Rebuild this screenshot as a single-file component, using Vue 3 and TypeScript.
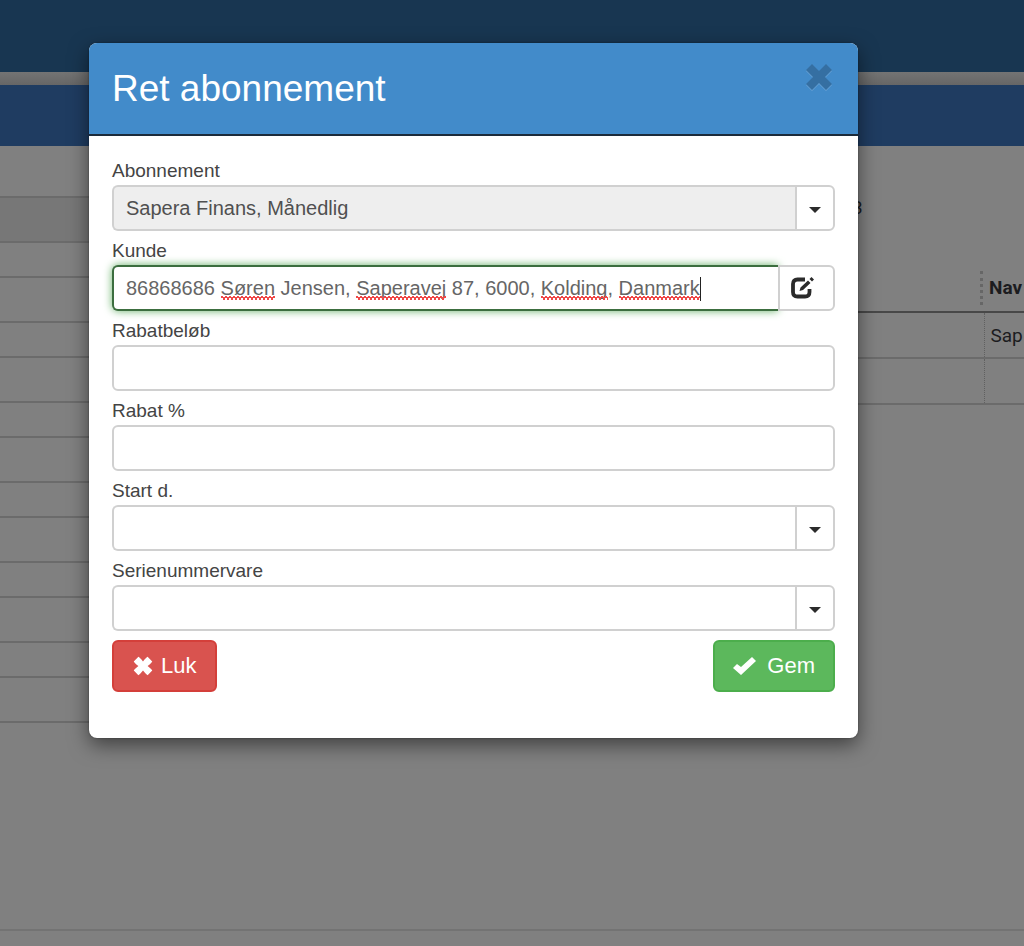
<script setup lang="ts">
import { computed, onMounted, ref } from 'vue'

type Kind = 'combo' | 'edit' | 'text'
interface Field {
  id: string
  label: string
  kind: Kind
  locked?: boolean
}
interface Mark {
  left: number
  width: number
}

const fields: Field[] = [
  { id: 'abonnement', label: 'Abonnement', kind: 'combo', locked: true },
  { id: 'kunde', label: 'Kunde', kind: 'edit' },
  { id: 'rabatbelob', label: 'Rabatbeløb', kind: 'text' },
  { id: 'rabat', label: 'Rabat %', kind: 'text' },
  { id: 'start', label: 'Start d.', kind: 'combo' },
  { id: 'serie', label: 'Serienummervare', kind: 'combo' },
]

const values = ref<Record<string, string>>({
  abonnement: 'Sapera Finans, Månedlig',
  kunde: '86868686 Søren Jensen, Saperavej 87, 6000, Kolding, Danmark',
  rabatbelob: '',
  rabat: '',
  start: '',
  serie: '',
})

const unknownWords = ['Søren', 'Saperavej', 'Kolding', 'Danmark']
const font = ref('')

function measure(text: string): number {
  const ctx = document.createElement('canvas').getContext('2d')
  if (!ctx || !font.value) return 0
  ctx.font = font.value
  return Math.round(ctx.measureText(text).width)
}

const marks = computed<Mark[]>(() => {
  const text = values.value.kunde
  return unknownWords
    .filter((word) => text.includes(word))
    .map((word) => ({ left: measure(text.slice(0, text.indexOf(word))), width: measure(word) }))
})
const caretLeft = computed(() => measure(values.value.kunde))

onMounted(() => {
  const input = document.getElementById('kunde')
  if (input) {
    const style = getComputedStyle(input)
    font.value = `${style.fontSize} ${style.fontFamily}`
  }
})
</script>

<template>
  <div class="page">
    <div class="topbar"></div>
    <div class="strip"></div>
    <div class="navbar"></div>
    <main class="content">
      <div class="boxes">
        <div v-for="n in 7" :key="n" class="box" :class="{ filled: n === 1 }"></div>
      </div>
      <div class="side">
        <p class="count">3</p>
        <table>
          <thead>
            <tr><th></th><th class="name"><span>Nav</span></th></tr>
          </thead>
          <tbody>
            <tr><td></td><td class="name">Sap</td></tr>
            <tr><td></td><td class="name"></td></tr>
          </tbody>
        </table>
      </div>
    </main>
    <footer class="foot"></footer>

    <div class="overlay">
      <section class="modal" role="dialog" aria-labelledby="title">
        <header class="head">
          <h1 id="title">Ret abonnement</h1>
          <button class="close" type="button" aria-label="Luk">
            <svg viewBox="0 0 26 26" width="26" height="26">
              <path d="M6 0 13 7 20 0 26 6 19 13 26 20 20 26 13 19 6 26 0 20 7 13 0 6Z" />
            </svg>
          </button>
        </header>
        <form class="body" @submit.prevent>
          <div v-for="f in fields" :key="f.id" class="field">
            <label :for="f.id">{{ f.label }}</label>
            <div class="group" :class="f.kind">
              <div class="entry">
                <input :id="f.id" v-model="values[f.id]" type="text" :readonly="f.locked" spellcheck="false" autocomplete="off" />
                <div v-if="f.kind === 'edit'" class="marks" aria-hidden="true">
                  <i v-for="(m, i) in marks" :key="i" class="mark" :style="{ left: m.left + 'px', width: m.width + 'px' }"></i>
                  <i class="cursor" :style="{ left: caretLeft + 'px' }"></i>
                </div>
              </div>
              <button v-if="f.kind === 'combo'" class="addon" type="button" :aria-label="f.label">
                <svg viewBox="0 0 12 6" width="12" height="6"><path d="M0 0H12L6 6Z" /></svg>
              </button>
              <button v-else-if="f.kind === 'edit'" class="addon" type="button" :aria-label="f.label">
                <svg viewBox="0 0 24 22" width="24" height="22">
                  <path d="M14 2.500H6.500Q2 2.500 2 7V15Q2 19.500 6.500 19.500H14Q18.500 19.500 18.500 15V12" fill="none" stroke="#2b2b2b" stroke-width="3.800" />
                  <path d="M8.500 14 9.500 10.500 17 3.500 19.500 6 12 13ZM18.500 2 20.500 0 23 2.500 21 4.500Z" />
                </svg>
              </button>
            </div>
          </div>
          <div class="actions">
            <button class="btn danger" type="button">
              <svg viewBox="0 0 26 26" width="20" height="20">
                <path d="M7 1Q8 1 13 7 18 1 19 1L25 7Q25 8 19 13 25 18 25 19L19 25Q18 25 13 19 8 25 7 25L1 19Q1 18 7 13 1 8 1 7Z" />
              </svg>
              Luk
            </button>
            <button class="btn success" type="submit">
              <svg viewBox="0 0 24 19" width="24" height="19"><path d="M0 11 4 7 8 10 19 0 23 4 8 18Z" /></svg>
              Gem
            </button>
          </div>
        </form>
      </section>
    </div>
  </div>
</template>

<style>
body {
  margin: 0;
}
</style>

<style scoped>
* {
  box-sizing: border-box;
}
.page {
  position: relative;
  display: flex;
  flex-direction: column;
  min-height: 100vh;
  overflow: hidden;
  background: #808080;
  color: #1c1c20;
  font: 19px/28px Roboto, sans-serif;
}
.topbar {
  height: 72px;
  background: #183651;
}
.strip {
  height: 13px;
  background: linear-gradient(#747474, #666);
}
.navbar {
  height: 61px;
  background: #1f3c61;
}
.content {
  display: flex;
  flex: 1;
}
.boxes {
  flex: 1;
  display: flex;
  flex-direction: column;
  gap: 33px;
  padding-top: 50px;
}
.box {
  height: 47px;
  border: solid #6b6b6b;
  border-width: 2px 0;
}
.filled {
  background: #777;
}
.side {
  width: 172px;
  padding-top: 48px;
}
.count {
  margin: 0 0 46px;
  height: 28px;
}
table {
  width: 100%;
  border-collapse: collapse;
  table-layout: fixed;
}
th,
td {
  height: 46px;
  padding: 2px 0 0;
  border-bottom: 2px solid #6b6b6b;
  text-align: left;
}
th {
  height: 44px;
  padding-bottom: 6px;
  border-bottom-color: #484848;
}
.name {
  width: 40px;
}
td.name {
  padding-left: 6px;
  border-left: 1px dotted #606060;
}
th span {
  display: block;
  margin-left: -4px;
  padding-left: 6px;
  border-left: 3px dotted #666;
  line-height: 34px;
}
.foot {
  height: 17px;
  border-top: 2px solid #737373;
}
.overlay {
  position: absolute;
  inset: 0;
  padding: 43px 166px 43px 89px;
}
.modal {
  border-radius: 8px;
  overflow: hidden;
  background: #fff;
  box-shadow: 0 7px 20px rgba(0, 0, 0, 0.5), 0 0 2px rgba(0, 0, 0, 0.4);
  font-family: "Liberation Sans", Arial, sans-serif;
}
.head {
  display: flex;
  justify-content: space-between;
  align-items: flex-start;
  padding: 20px 26px 20px 23px;
  border-bottom: 2px solid #1c2b3a;
  background: #428bca;
}
h1 {
  margin: 0;
  color: #fff;
  font-size: 37px;
  font-weight: 400;
  line-height: 51px;
}
button {
  display: flex;
  align-items: center;
  justify-content: center;
  padding: 0;
  border: 0;
  background: none;
}
.close {
  margin-top: 1px;
}
.close svg {
  fill: #356fa2;
  filter: drop-shadow(0 1px 0 #68a2d5);
}
.body {
  padding: 20px 23px 46px;
}
.field {
  margin-bottom: 5px;
}
label {
  display: block;
  color: #444;
  line-height: 29px;
}
.group {
  display: flex;
  height: 46px;
}
.entry {
  position: relative;
  flex: 1;
}
input {
  width: 100%;
  height: 100%;
  padding: 0 12px;
  border: 2px solid #d0d0d0;
  border-radius: 6px;
  outline: 0;
  background: #fff;
  color: #505050;
  font-family: inherit;
  font-size: 20px;
}
.combo input,
.edit input {
  border-right: 0;
  border-radius: 6px 0 0 6px;
}
input:read-only {
  background: #eee;
}
.edit input {
  border-color: #3c6e3f;
  box-shadow: 0 0 9px #67b168;
  color: #666;
}
.addon {
  position: relative;
  width: 40px;
  padding-top: 3px;
  border: 2px solid #d0d0d0;
  border-radius: 0 6px 6px 0;
  background: #fff;
  fill: #2b2b2b;
}
.edit .addon {
  width: 57px;
  padding: 0 8px 0 0;
}
.marks {
  position: absolute;
  inset: 0 12px 0 14px;
  pointer-events: none;
}
.mark {
  position: absolute;
  top: 31px;
  height: 4px;
  background:
    linear-gradient(45deg, transparent 40%, #f04848 40%, #f04848 65%, transparent 65%) 0 0 / 4px 4px,
    linear-gradient(-45deg, transparent 40%, #f04848 40%, #f04848 65%, transparent 65%) 2px 0 / 4px 4px;
}
.cursor {
  position: absolute;
  top: 12px;
  width: 1px;
  height: 24px;
  background: #222;
}
.actions {
  display: flex;
  justify-content: space-between;
  padding-top: 4px;
}
.btn {
  height: 52px;
  gap: 8px;
  padding: 0 19px;
  border: 2px solid #d43f3a;
  border-radius: 6px;
  background: #d9534f;
  color: #fff;
  fill: #fff;
  font-family: inherit;
  font-size: 22px;
}
.success {
  gap: 10px;
  padding: 0 18px;
  border-color: #4cae4c;
  background: #5cb85c;
}
</style>
